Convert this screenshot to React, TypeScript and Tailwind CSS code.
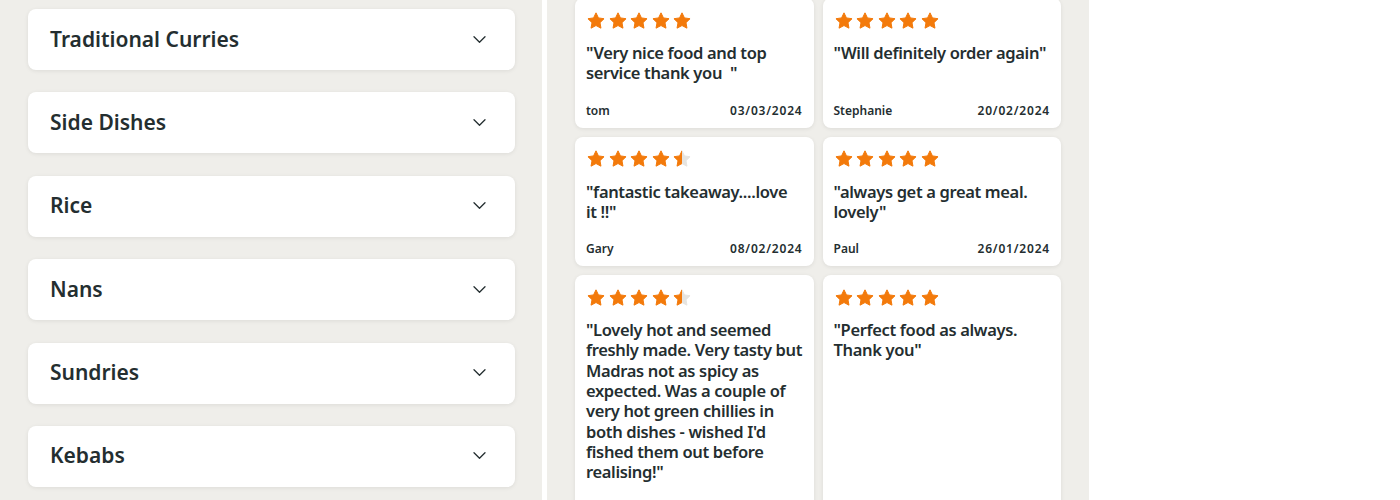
import React from "react";

const categories = [
  "Traditional Curries",
  "Side Dishes",
  "Rice",
  "Nans",
  "Sundries",
  "Kebabs",
];

type Review = {
  rating: number;
  text: string;
  name?: string;
  date?: string;
};

// last row's footers sit below the fold in the screenshot, so they're left empty
const reviews: Review[] = [
  { rating: 5, text: "\"Very nice food and top service thank you \u00a0\"", name: "tom", date: "03/03/2024" },
  { rating: 5, text: "\"Will definitely order again\"", name: "Stephanie", date: "20/02/2024" },
  { rating: 4.5, text: "\"fantastic takeaway....love it\u00a0!!\"", name: "Gary", date: "08/02/2024" },
  { rating: 5, text: "\"always get a great meal. lovely\"", name: "Paul", date: "26/01/2024" },
  {
    rating: 4.5,
    text: "\"Lovely hot and seemed freshly made. Very tasty but Madras not as spicy as expected. Was a couple of very hot green chillies in both dishes - wished I'd fished them out before realising!\"",
  },
  { rating: 5, text: "\"Perfect food as always. Thank you\"" },
];

const STAR =
  "M12 2.2l2.95 6.1 6.7.95-4.85 4.7 1.15 6.65L12 17.45 6.05 20.6 7.2 13.95 2.35 9.25l6.7-.95L12 2.2z";

function Star({ fill, id }: { fill: "full" | "half"; id: string }) {
  return (
    <svg viewBox="0 0 24 24" className="h-5 w-5">
      {fill === "half" && (
        <defs>
          <linearGradient id={id} x1="0" x2="1" y1="0" y2="0">
            <stop offset="50%" stopColor="#f37a0b" />
            <stop offset="50%" stopColor="#e6e4e0" />
          </linearGradient>
        </defs>
      )}
      <path
        d={STAR}
        fill={fill === "half" ? `url(#${id})` : "#f37a0b"}
        stroke={fill === "half" ? `url(#${id})` : "#f37a0b"}
        strokeWidth="1.2"
        strokeLinejoin="round"
      />
    </svg>
  );
}

function Stars({ rating, uid }: { rating: number; uid: string }) {
  return (
    <div className="flex h-[19px] items-center gap-[1.5px]">
      {[0, 1, 2, 3, 4].map((i) => (
        <Star key={i} id={`${uid}-${i}`} fill={rating - i >= 1 ? "full" : "half"} />
      ))}
    </div>
  );
}

function Chevron() {
  return (
    <svg viewBox="0 0 13 7" className="h-[7px] w-[13px] overflow-visible" fill="none">
      <path d="M1 0.8l5.5 5.4 5.5-5.4" stroke="#242e30" strokeWidth="1.3" strokeLinecap="round" strokeLinejoin="round" />
    </svg>
  );
}

export default function App() {
  return (
    <div
      className="flex h-[500px] w-[1400px] gap-[5px] overflow-hidden bg-white text-[#242e30]"
      style={{ fontFamily: '"Noto Sans", "Open Sans", sans-serif' }}
    >
      {/* Menu categories */}
      <div className="flex w-[542px] flex-col gap-[22.4px] bg-[#efeeea] pl-[28px] pr-[27px] pt-[9px]">
        {categories.map((c) => (
          <button
            key={c}
            className="flex h-[61px] shrink-0 items-center justify-between rounded-lg bg-white pb-[1px] pl-[22px] pr-[29px] text-left shadow-[0_1px_4px_rgba(0,0,0,0.08)]"
          >
            <span className="text-[21px] font-semibold leading-none">{c}</span>
            <Chevron />
          </button>
        ))}
      </div>

      {/* Reviews */}
      <div className="w-[542px] bg-[#efeeea] px-[28px]">
        <div className="-mt-[2px] grid grid-cols-2 gap-[9px]">
          {reviews.map((r, i) => (
            <div
              key={i}
              className="flex flex-col rounded-lg bg-white px-[11px] pb-[9px] pt-[13px] shadow-[0_1px_4px_rgba(0,0,0,0.08)]"
            >
              <Stars rating={r.rating} uid={`r${i}`} />
              <p className="mt-[13px] text-[16.5px] font-semibold leading-[20.3px] tracking-[-0.35px]">{r.text}</p>
              <div className="mt-auto box-content flex h-4 items-center justify-between pt-[19px] text-[12px] font-semibold leading-4">
                {r.name && <span>{r.name}</span>}
                {r.date && <span className="tracking-[0.8px]">{r.date}</span>}
              </div>
            </div>
          ))}
        </div>
      </div>
    </div>
  );
}
